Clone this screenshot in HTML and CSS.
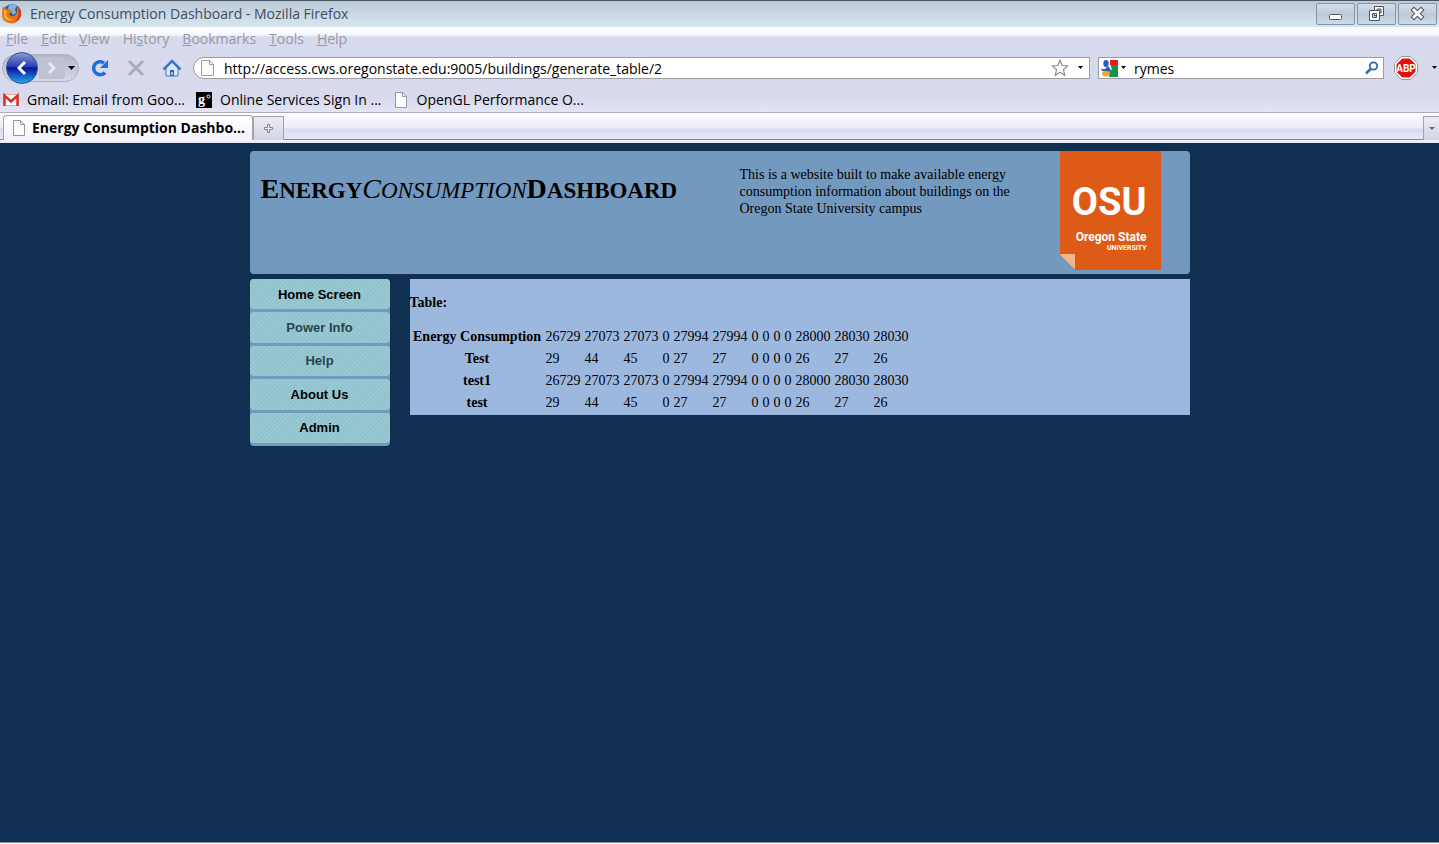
FILE: index.html
```html
<!DOCTYPE html>
<html lang="en">
<head>
<meta charset="utf-8">
<title>Energy Consumption Dashboard</title>
<link rel="stylesheet" href="styles.css">
</head>
<body>
<header class="chrome">
  <div class="titlebar">
    <svg class="firefox" width="22" height="22" viewBox="0 0 22 22" aria-hidden="true">
      <circle cx="11" cy="10" r="9" fill="#2c5c9c"/>
      <path d="M8 2q5-2 8 1l-2 3 1 4-3 2-2-4-3-2z" fill="#7fb5de"/>
      <path d="M2 3l3 3q3-1 4 1l2 1q0 2-3 3 1 3 5 2 4-2 3-9 5 4 4 9-2 7-9 7.500Q1 20 1 12q0-5 1-9z" fill="#e8741c"/>
      <path d="M3 7l3 1-1 4q2 5 8 4-6 4-10-2z" fill="#f6b233"/>
      <path d="M17 3q4 4 3 10-2 5-7 6 6-4 4-16z" fill="#c8481a"/>
    </svg>
    <span class="window-title">Energy Consumption Dashboard - Mozilla Firefox</span>
    <div class="window-buttons">
      <button class="window-button" aria-label="Minimize"><svg width="16" height="16" viewBox="0 0 16 16"><rect x="1.500" y="8.500" width="12" height="5" rx="1" fill="#fff" stroke="#50545f"/></svg></button>
      <button class="window-button" aria-label="Restore"><svg width="16" height="16" viewBox="0 0 16 16" fill="#fff" stroke="#50545f"><path fill-rule="evenodd" d="M5.500.500h9v9h-9zM8 3v4h4V3z"/><path fill-rule="evenodd" d="M.500 4.500h10v10h-10zM3.500 7.500v4h4v-4z"/></svg></button>
      <button class="window-button" aria-label="Close"><svg width="16" height="16" viewBox="0 0 16 16"><path d="M4 4l7 7M11 4l-7 7" stroke="#50545f" stroke-width="5" stroke-linecap="square"/><path d="M4 4l7 7M11 4l-7 7" stroke="#fff" stroke-width="3" stroke-linecap="square"/></svg></button>
    </div>
  </div>
  <nav class="menubar" aria-label="Menu">
    <button><u>F</u>ile</button><button><u>E</u>dit</button><button><u>V</u>iew</button><button>Hi<u>s</u>tory</button><button><u>B</u>ookmarks</button><button><u>T</u>ools</button><button><u>H</u>elp</button>
  </nav>
  <div class="toolbar">
    <div class="history-group">
      <button class="back" aria-label="Back"><svg width="34" height="34" viewBox="0 0 34 34">
        <defs><linearGradient id="orb" x2="0" y2="1"><stop offset="0" stop-color="#8b9bdc"/><stop offset=".45" stop-color="#2b3db4"/><stop offset=".5" stop-color="#09129a"/><stop offset="1" stop-color="#23aef2"/></linearGradient></defs>
        <circle cx="17" cy="17" r="15.500" fill="url(#orb)" stroke="#355586"/><path d="M20 11l-6 6 6 6" fill="none" stroke="#fff" stroke-width="3"/></svg></button>
      <button class="forward" aria-label="Forward"><svg width="14" height="16" viewBox="0 0 14 16"><path d="M4 3l5 5-5 5" fill="none" stroke="#e6e8f2" stroke-width="3"/></svg></button>
      <button class="drop" aria-label="Recent pages"><svg width="8" height="6" viewBox="0 0 8 6"><path d="M0 1h7L3.500 5z"/></svg></button>
    </div>
    <button class="tool" aria-label="Reload"><svg width="20" height="20" viewBox="0 0 20 20"><path d="M15 14.500A6.500 6.500 0 1 1 14 5" fill="none" stroke="#1d6fe0" stroke-width="3.500"/><path d="M18 2v8h-8z" fill="#1d6fe0"/></svg></button>
    <button class="tool" aria-label="Stop"><svg width="20" height="20" viewBox="0 0 20 20"><path d="M3 3l14 14M17 3L3 17" stroke="#a9abb6" stroke-width="3"/></svg></button>
    <button class="tool" aria-label="Home"><svg width="20" height="20" viewBox="0 0 20 20"><path d="M4 10v8h12v-8l-6-6z" fill="#dcebfc" stroke="#4876bb"/><path d="M1.500 11.500L10 3l8.500 8.500" fill="none" stroke="#3c74c4" stroke-width="2.500"/><path d="M8 12h4v6H8z" fill="#2f5fae"/><path d="M9 14h2v3H9z" fill="#9cc3f0"/></svg></button>
    <div class="address">
      <svg class="page-icon" width="14" height="16" viewBox="0 0 14 16"><path d="M.500.500h8l4 4v11H.500z" fill="#fbfbfb" stroke="#9c9ca0"/><path d="M8.500.500v4h4" fill="none" stroke="#9c9ca0"/></svg>
      <input type="text" aria-label="Address" value="http://access.cws.oregonstate.edu:9005/buildings/generate_table/2">
      <button aria-label="Bookmark this page"><svg width="18" height="18" viewBox="0 0 18 18"><path d="M9 1.500l2.200 5 5.300.500-4 3.600 1.200 5.600L9 13.300l-4.700 2.900 1.200-5.600-4-3.600 5.300-.500z" fill="#fff" stroke="#888" stroke-width="1.200"/></svg></button>
      <button aria-label="Show history"><svg width="6" height="4" viewBox="0 0 6 4"><path d="M0 0h5L2.500 3z"/></svg></button>
    </div>
    <div class="search">
      <button class="engine" aria-label="Search engine"><svg width="17" height="17" viewBox="0 0 17 17"><path d="M9 0h8v5H9z" fill="#e31b1b"/><path d="M10 5h7v12H8v-5z" fill="#179447"/><path d="M0 0h9v5l2 4-3 3v5H0z" fill="#fff"/><ellipse cx="5" cy="3.500" rx="2.700" ry="3.500" fill="#1e5fbe"/><path d="M0 8q2 2 4 1l3-3 3 4-2 2-7-1z" fill="#1e5fbe"/><ellipse cx="5" cy="13.800" rx="4" ry="2.700" fill="#f3a81c"/></svg><svg width="6" height="4" viewBox="0 0 6 4"><path d="M0 0h5L2.500 3z"/></svg></button>
      <input type="text" aria-label="Search" value="rymes">
      <button aria-label="Search"><svg width="14" height="14" viewBox="0 0 14 14" fill="none" stroke="#386aa5"><circle cx="8.500" cy="5" r="3.700" stroke-width="1.800"/><path d="M5.500 8L1 12.500" stroke-width="2.500"/></svg></button>
    </div>
    <button class="adblock" aria-label="Adblock Plus"><svg width="24" height="24" viewBox="0 0 24 24"><path d="M7.500.500h9l7 7v9l-7 7h-9l-7-7v-9z" fill="#fff" stroke="#999"/><path d="M8.300 2.500h7.400l5.800 5.800v7.400l-5.800 5.800H8.300l-5.800-5.800V8.300z" fill="#e5100f"/><text x="12" y="16" text-anchor="middle" class="abp">ABP</text></svg></button>
    <button class="adblock-drop" aria-label="Adblock options"><svg width="6" height="4" viewBox="0 0 6 4"><path d="M0 0h5L2.500 3z"/></svg></button>
  </div>
  <nav class="bookmarks" aria-label="Bookmarks">
    <a href="#"><svg width="16" height="16" viewBox="0 0 16 16"><path d="M.500 2.500h15v11H.500z" fill="#fff" stroke="#e9a7a4"/><path d="M1.500 14V3.500L8 9.500l6.500-6V14" fill="none" stroke="#d8302b" stroke-width="2.500"/></svg>Gmail: Email from Goo...</a>
    <a href="#"><svg width="16" height="16" viewBox="0 0 16 16"><path d="M0 0h16v16H0z"/><text x="2" y="12" class="g-letter">g</text><circle cx="12.500" cy="4.500" r="1.500" fill="none" stroke="#fff"/></svg>Online Services Sign In ...</a>
    <a href="#"><svg width="16" height="16" viewBox="0 0 16 16"><path d="M2.500.500h7l4 4v11h-11z" fill="#fbfbfb" stroke="#98989c"/><path d="M9.500.500v4h4" fill="none" stroke="#98989c"/></svg>OpenGL Performance O...</a>
  </nav>
  <div class="tabstrip">
    <button class="tab"><svg width="14" height="16" viewBox="0 0 14 16"><path d="M1.500.500h7l4 4v11h-11z" fill="#fbfbfb" stroke="#98989c"/><path d="M8.500.500v4h4" fill="none" stroke="#98989c"/></svg>Energy Consumption Dashbo...</button>
    <button class="new-tab" aria-label="New tab"><svg width="9" height="9" viewBox="0 0 9 9"><path d="M3.500.500h2v3h3v2h-3v3h-2v-3h-3v-2h3z" fill="#eee" stroke="#85858d"/></svg></button>
    <button class="all-tabs" aria-label="All tabs"><svg width="6" height="4" viewBox="0 0 6 4"><path d="M0 0h6L3 3z" fill="#666"/></svg></button>
  </div>
</header>
<div class="page">
  <div class="container">
    <header class="banner">
      <h1><span>Energy</span><em>Consumption</em><span>Dashboard</span></h1>
      <p>This is a website built to make available energy consumption information about buildings on the Oregon State University campus</p>
      <a class="logo" href="#">
        <span class="logo-osu">OSU</span>
        <span class="logo-name">Oregon State</span>
        <span class="logo-univ">UNIVERSITY</span>
      </a>
    </header>
    <div class="columns">
      <nav class="side" aria-label="Site">
        <a href="#">Home Screen</a>
        <a href="#" class="muted">Power Info</a>
        <a href="#" class="muted">Help</a>
        <a href="#">About Us</a>
        <a href="#">Admin</a>
      </nav>
      <main class="content">
        <h2 id="table-title">Table:</h2>
        <table aria-labelledby="table-title">
          <tr><th scope="row">Energy Consumption</th><td>26729</td><td>27073</td><td>27073</td><td>0</td><td>27994</td><td>27994</td><td>0</td><td>0</td><td>0</td><td>0</td><td>28000</td><td>28030</td><td>28030</td></tr>
          <tr><th scope="row">Test</th><td>29</td><td>44</td><td>45</td><td>0</td><td>27</td><td>27</td><td>0</td><td>0</td><td>0</td><td>0</td><td>26</td><td>27</td><td>26</td></tr>
          <tr><th scope="row">test1</th><td>26729</td><td>27073</td><td>27073</td><td>0</td><td>27994</td><td>27994</td><td>0</td><td>0</td><td>0</td><td>0</td><td>28000</td><td>28030</td><td>28030</td></tr>
          <tr><th scope="row">test</th><td>29</td><td>44</td><td>45</td><td>0</td><td>27</td><td>27</td><td>0</td><td>0</td><td>0</td><td>0</td><td>26</td><td>27</td><td>26</td></tr>
        </table>
      </main>
    </div>
  </div>
</div>
</body>
</html>
```

FILE: styles.css
```css
* { box-sizing: border-box; }
body {
  margin: 0;
  min-height: 100vh;
  display: flex;
  flex-direction: column;
  background: #fff;
  font: 14px/18px "Open Sans", "Noto Sans", sans-serif;
  color: #000;
}
button, input {
  margin: 0;
  padding: 0;
  border: 0;
  background: none;
  font: inherit;
  color: inherit;
}
button { display: flex; align-items: center; justify-content: center; }
a { color: inherit; text-decoration: none; }
svg { display: block; flex: none; }

.chrome {
  background: linear-gradient(#fff 27px, #f5f5ff 35px, #d8dbee 37px, #d6daec 98px, #e4e4f6 112px);
}
.titlebar {
  display: flex;
  align-items: center;
  height: 27px;
  padding: 0 2px 0 1px;
  border-top: 1px solid #4b5563;
  background: linear-gradient(#bccad8, #d8e6f0);
  color: #3f4d5d;
}
.window-title { margin-left: 7px; }
.window-buttons { display: flex; gap: 2px; margin-left: auto; }
.window-button {
  width: 39px;
  height: 22px;
  border: 1px solid #8795a9;
  border-radius: 2px;
  background: linear-gradient(#d3deea, #bccbdb 50%, #cbdbe8);
}
.menubar {
  display: flex;
  gap: 13px;
  height: 22px;
  padding: 1px 6px 0;
  color: #9799a6;
}
.toolbar {
  display: flex;
  align-items: center;
  height: 38px;
  padding-left: 2px;
}
.history-group {
  display: flex;
  align-items: center;
  width: 77px;
  height: 28px;
  margin-right: 11px;
  padding-left: 2px;
  border: 1px solid #abafc4;
  border-radius: 14px;
  background: linear-gradient(#b3b7ca, #d6d9e8);
}
.forward {
  width: 26px;
  height: 22px;
  border-radius: 0 4px 4px 0;
  background: #bec2d2;
}
.drop { flex: 1; }
.tool { width: 20px; height: 20px; margin-right: 16px; }
.address, .search {
  display: flex;
  align-items: center;
  height: 22px;
  border: 1px solid #9a9ca8;
  background: #fff;
}
.address {
  flex: 1;
  margin-left: -5px;
  margin-right: 8px;
  padding: 0 5px 0 7px;
  border-radius: 11px 0 0 11px;
  gap: 9px;
}
.address input, .search input { flex: 1; min-width: 0; height: 20px; outline: 0; }
.search { width: 286px; padding: 0 4px 0 2px; }
.engine { gap: 3px; margin-right: 7px; }
.adblock { margin-left: 10px; }
.abp { font: bold 10px Roboto, "Liberation Sans", sans-serif; fill: #fff; }
.adblock-drop { width: 6px; margin-left: 14px; margin-right: 1px; }
.g-letter { font: bold 14px "Liberation Serif", serif; fill: #fff; }
.bookmarks {
  display: flex;
  align-items: center;
  gap: 11px;
  height: 26px;
  padding-left: 3px;
  border-bottom: 1px solid #adaebb;
}
.bookmarks a { display: flex; align-items: center; gap: 8px; }
.tabstrip {
  display: flex;
  align-items: flex-end;
  height: 30px;
  padding: 2px 0 3px 3px;
  background: linear-gradient(#fcfcff, #ececfa 15px, #d9dcf1 16px, #e6e8f9 26px, #85858d 26px, #85858d 27px, #f6f6fa 27px, #e2e4ee);
}
.tab {
  width: 250px;
  height: 25px;
  gap: 6px;
  justify-content: flex-start;
  padding-left: 8px;
  border: 1px solid #a2a2ac;
  border-bottom: 0;
  border-radius: 4px 4px 0 0;
  background: linear-gradient(#fff, #f4f2fa);
  font-weight: bold;
  white-space: nowrap;
}
.new-tab, .all-tabs {
  height: 24px;
  border: 1px solid #a2a2ac;
  border-bottom: 0;
  background: linear-gradient(#ececf2, #d3d4e4);
}
.new-tab { width: 31px; }
.all-tabs { width: 16px; margin-left: auto; border-right: 0; }

.page {
  flex: 1;
  margin-bottom: 1px;
  padding: 8px 20px;
  border-bottom: 1px solid #8798a0;
  background: #103052;
  font: 14px/17px "Liberation Serif", serif;
}
.container { max-width: 940px; margin: 0 auto; }
.banner {
  display: grid;
  grid-template-columns: 480px 1fr 130px;
  align-items: start;
  min-height: 123px;
  border-radius: 4px;
  background: #7399be;
}
.banner h1 {
  display: flex;
  margin: 22px 0 0 11px;
  font-size: 23px;
  line-height: 32px;
  text-transform: uppercase;
}
.banner h1 > * { display: block; }
.banner h1 > *::first-letter { font-size: 28px; }
.banner em { font-weight: normal; }
.banner p { margin: 15px 20px 0 10px; }
.logo {
  display: flex;
  flex-direction: column;
  align-items: flex-end;
  width: 101px;
  height: 119px;
  padding: 24px 14px 0 0;
  background: linear-gradient(45deg, transparent 11px, #f2b48c 11px) 0 100% / 15px 16px no-repeat,
    linear-gradient(#dd5a17, #dd5a17) 0 0 / 100% 103px no-repeat,
    linear-gradient(#dd5a17, #dd5a17) 100% 100% / 86px 16px no-repeat;
  color: #fff;
  font-family: Roboto, "Liberation Sans", sans-serif;
  font-weight: bold;
  white-space: nowrap;
}
.logo-osu { font-size: 38px; line-height: 54px; }
.logo-name { font-size: 12px; line-height: 16px; }
.logo-univ { font-size: 7px; line-height: 6px; }
.columns {
  display: grid;
  grid-template-columns: 140px 1fr;
  gap: 20px;
  align-items: start;
  margin-top: 5px;
}
.side {
  display: grid;
  grid-auto-rows: 1fr;
  gap: 3px;
  min-height: 167px;
  padding-bottom: 3px;
  border-radius: 4px;
  background: #7399be;
  font: bold 13px/17px "Liberation Sans", sans-serif;
}
.side a {
  display: flex;
  align-items: center;
  justify-content: center;
  border-radius: 4px;
  background: repeating-linear-gradient(135deg, #8fc1cd 0 1px, #9ccad4 2px 3px);
}
.side .muted { color: #28444c; }
.content { padding-top: 15px; background: #9cb8de; }
.content h2 { margin: 0 0 14px; font-size: 14px; line-height: 17px; }
.content table { border-spacing: 2px; line-height: 18px; }
.content th { width: 131px; padding: 1px; }
.content td { padding: 1px; }
```
